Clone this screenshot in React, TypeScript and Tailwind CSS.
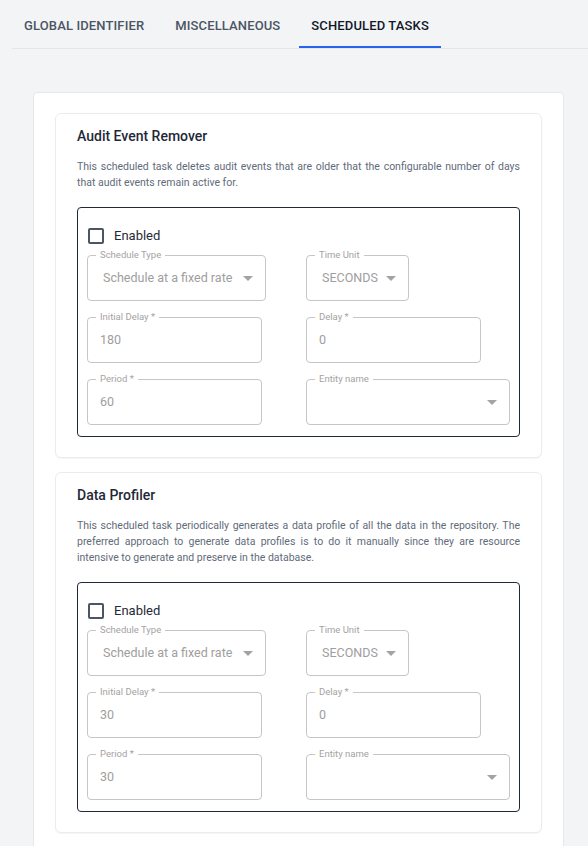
import React from "react";

function Arrow() {
  return (
    <svg viewBox="0 0 24 24" className="w-6 h-6 shrink-0 fill-[#a3a3a3]">
      <path d="M7 10l5 5 5-5z" />
    </svg>
  );
}

function Field({
  label,
  value,
  width,
  select,
}: {
  label: string;
  value?: string;
  width: string;
  select?: boolean;
}) {
  return (
    <div
      className={`relative h-[46px] rounded-[4px] border border-[#c6c6c6] flex items-center ${width} ${
        select ? "pl-[15px] pr-[5px] justify-between" : "pl-[12px]"
      }`}
    >
      <span className="absolute left-[8px] -top-[7px] bg-white px-[4px] text-[9.5px] leading-[12px] text-[#a3a3a3] whitespace-nowrap">
        {label}
      </span>
      <span className="text-[12.5px] text-[#9e9e9e] whitespace-nowrap">{value}</span>
      {select && <Arrow />}
    </div>
  );
}

function TaskCard({
  title,
  description,
  initialDelay,
  period,
}: {
  title: string;
  description: string;
  initialDelay: string;
  period: string;
}) {
  return (
    <div className="rounded-[6px] border border-[#ececec] bg-white px-[21px] pt-[12px] pb-[20px] shadow-[0_1px_1px_rgba(0,0,0,0.04)]">
      <h2 className="text-[14px] leading-[20px] font-medium text-[#1f2937]">{title}</h2>
      <p className="mt-[13px] text-[10.5px] leading-[16px] text-[#5f6b7a] text-justify">
        {description}
      </p>
      <div className="mt-[16px] rounded-[4px] border border-[#1f2937] px-[9px] pt-[9px] pb-[11px]">
        <div className="h-[38px] flex items-center pl-[1px]">
          <div className="w-[16px] h-[16px] rounded-[2px] border-2 border-[#4b5563]" />
          <span className="ml-[10px] text-[13px] text-[#1f2937]">Enabled</span>
        </div>
        <div className="grid grid-cols-[219px_1fr] gap-y-[16px]">
          <Field label="Schedule Type" value="Schedule at a fixed rate" width="w-[179px]" select />
          <Field label="Time Unit" value="SECONDS" width="w-[103px]" select />
          <Field label="Initial Delay *" value={initialDelay} width="w-[175px]" />
          <Field label="Delay *" value="0" width="w-[175px]" />
          <Field label="Period *" value={period} width="w-[175px]" />
          <Field label="Entity name" value="" width="w-full" select />
        </div>
      </div>
    </div>
  );
}

export default function App() {
  const tabs = ["GLOBAL IDENTIFIER", "MISCELLANEOUS", "SCHEDULED TASKS"];
  return (
    <div className="min-h-[846px] bg-[#f3f4f6] font-['Roboto',sans-serif] overflow-hidden">
      <div className="ml-3 flex gap-[7px] border-b border-[#e3e5e8]">
        {tabs.map((t, i) => (
          <div
            key={t}
            className={`h-[48px] px-3 pt-[5px] flex items-center text-[13px] font-medium tracking-[0.01em] border-b-2 ${
              i === 2 ? "text-[#111827] border-[#2563eb]" : "text-[#4b5563] border-transparent"
            }`}
          >
            {t}
          </div>
        ))}
      </div>
      <div className="ml-[33px] mr-[24px] mt-[43px] rounded-[4px] border border-[#e5e7eb] bg-white px-[21px] pt-[20px] pb-[20px] flex flex-col gap-[14px]">
        <TaskCard
          title="Audit Event Remover"
          description="This scheduled task deletes audit events that are older that the configurable number of days that audit events remain active for."
          initialDelay="180"
          period="60"
        />
        <TaskCard
          title="Data Profiler"
          description="This scheduled task periodically generates a data profile of all the data in the repository. The preferred approach to generate data profiles is to do it manually since they are resource intensive to generate and preserve in the database."
          initialDelay="30"
          period="30"
        />
      </div>
    </div>
  );
}
